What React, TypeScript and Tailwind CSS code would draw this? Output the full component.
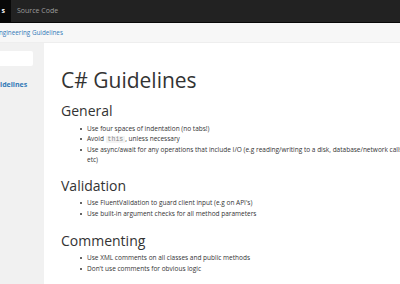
import React from "react";

const Li = ({ children }: { children: React.ReactNode }) => (
  <li className="flex">
    <span className="w-[7px] shrink-0 flex items-start pt-[4px]">
      <span className="block w-[2px] h-[2px] rounded-full bg-[#333]"></span>
    </span>
    <span className="whitespace-nowrap">{children}</span>
  </li>
);

export default function App() {
  return (
    <div className="w-[400px] h-[284px] overflow-hidden bg-white text-[#333] font-['Open_Sans',sans-serif] flex flex-col">
      <div className="h-[23px] shrink-0 bg-[#222] border-b border-[#080808] flex items-stretch text-[7px]">
        <div className="w-[11px] bg-[#080808] flex items-center justify-end pr-[6px] text-white font-bold">s</div>
        <div className="flex items-center ml-[6px] text-[#9d9d9d]">Source Code</div>
      </div>
      <div className="h-[20px] shrink-0 bg-[#f7f7f7] border-b border-[#eeeeee] flex items-center text-[6.3px] text-[#337ab7]">
        <span className="-ml-[1px]">ngineering Guidelines</span>
      </div>
      <div className="flex flex-1 min-h-0">
        <div className="w-[44px] shrink-0 bg-[#f1f1f1] pt-[8px]">
          <div className="w-[33px] h-[15px] bg-white rounded-r-[2px]"></div>
          <div className="mt-[14px] text-[7px] font-bold text-[#337ab7] leading-[10px]">idelines</div>
        </div>
        <div className="pl-[17px] pt-[25px] w-[420px] shrink-0">
          <h1 className="text-[21px] leading-[24px]">C# Guidelines</h1>
          <h2 className="mt-[10px] text-[14px] leading-[18px]">General</h2>
          <ul className="mt-[4px] pl-[19px] text-[6.5px] leading-[10px]">
            <Li>Use four spaces of indentation (no tabs!)</Li>
            <Li>
              Avoid <code className="font-['Liberation_Mono',monospace] bg-[#f3f3f3] text-[#888] px-[2px] rounded-[1px]">this</code>, unless necessary
            </Li>
            <Li>
              Use async/await for any operations that include I/O (e.g reading/writing to a disk, database/network calls,
              <br />
              etc)
            </Li>
          </ul>
          <h2 className="mt-[12px] text-[14px] leading-[18px]">Validation</h2>
          <ul className="mt-[3px] pl-[19px] text-[6.5px] leading-[10.5px]">
            <Li>Use FluentValidation to guard client input (e.g on API's)</Li>
            <Li>Use built-in argument checks for all method parameters</Li>
          </ul>
          <h2 className="mt-[13px] text-[14px] leading-[18px]">Commenting</h2>
          <ul className="mt-[3px] pl-[19px] text-[6.5px] leading-[10.5px]">
            <Li>Use XML comments on all classes and public methods</Li>
            <Li>Don't use comments for obvious logic</Li>
          </ul>
        </div>
      </div>
    </div>
  );
}
